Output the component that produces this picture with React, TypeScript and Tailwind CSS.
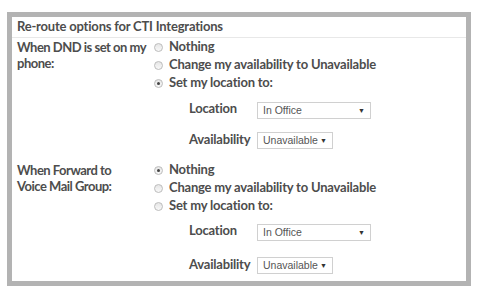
import React from "react";

const font = { fontFamily: "Lato, 'Open Sans', sans-serif" };

function Radio({ checked }: { checked?: boolean }) {
  return (
    <span className="w-[9px] h-[9px] rounded-full border border-[#bcbcbc] bg-gradient-to-b from-[#e6e6e6] to-[#f8f8f8] flex items-center justify-center shrink-0">
      {checked && <span className="w-[3px] h-[3px] rounded-full bg-[#444]" />}
    </span>
  );
}

function RadioRow({ checked, label }: { checked?: boolean; label: string }) {
  return (
    <div className="h-[18px] flex items-center gap-[6px] whitespace-nowrap">
      <Radio checked={checked} />
      <span>{label}</span>
    </div>
  );
}

function Select({ value, w }: { value: string; w: string }) {
  return (
    <div
      className={`${w} h-[17px] border border-[#d0d0d0] bg-white flex items-center justify-between pl-[5px] pr-[5px] text-[10.5px] leading-[15px] font-normal text-[#555] tracking-normal`}
      style={{ fontFamily: "'Liberation Sans', Arial, sans-serif" }}
    >
      <span>{value}</span>
      <span className="text-[7px] text-[#333]">▼</span>
    </div>
  );
}

function Section({
  label,
  checkedIndex,
  locTop,
  availTop,
}: {
  label: React.ReactNode;
  checkedIndex: number;
  locTop: string;
  availTop: string;
}) {
  return (
    <div className="flex">
      <div className="w-[137px] pt-[1px] leading-[16px] whitespace-nowrap tracking-[-0.5px]">{label}</div>
      <div className="flex flex-col">
        <RadioRow checked={checkedIndex === 0} label="Nothing" />
        <RadioRow checked={checkedIndex === 1} label="Change my availability to Unavailable" />
        <RadioRow checked={checkedIndex === 2} label="Set my location to:" />
        <div className={`h-[17px] flex items-center pl-[35px] ${locTop}`}>
          <span className="w-[68px] -mt-[3px]">Location</span>
          <Select value="In Office" w="w-[114px]" />
        </div>
        <div className={`h-[17px] flex items-center pl-[35px] ${availTop}`}>
          <span className="w-[68px] -mt-[1px]">Availability</span>
          <Select value="Unavailable" w="w-[76px]" />
        </div>
      </div>
    </div>
  );
}

export default function App() {
  return (
    <div className="w-[477px] h-[295px] bg-white pt-[12px] pl-[7px]" style={font}>
      <div className="w-[464px] h-[274px] border-[5px] border-[#b3b3b3] bg-white text-[13px] font-bold text-[#4d4d4d] tracking-[-0.2px]">
        <div className="h-[21px] px-[5px] border-b border-[#e8e8e8] flex items-center">
          Re-route options for CTI Integrations
        </div>
        <div className="pl-[5px] flex flex-col">
          <Section
            label={
              <>
                When DND is set on my
                <br />
                phone:
              </>
            }
            checkedIndex={2}
            locTop="mt-[10px]"
            availTop="mt-[13px]"
          />
          <div className="mt-[12px]">
            <Section
              label={
                <>
                  When Forward to
                  <br />
                  Voice Mail Group:
                </>
              }
              checkedIndex={0}
              locTop="mt-[9px]"
              availTop="mt-[16px]"
            />
          </div>
        </div>
      </div>
    </div>
  );
}
